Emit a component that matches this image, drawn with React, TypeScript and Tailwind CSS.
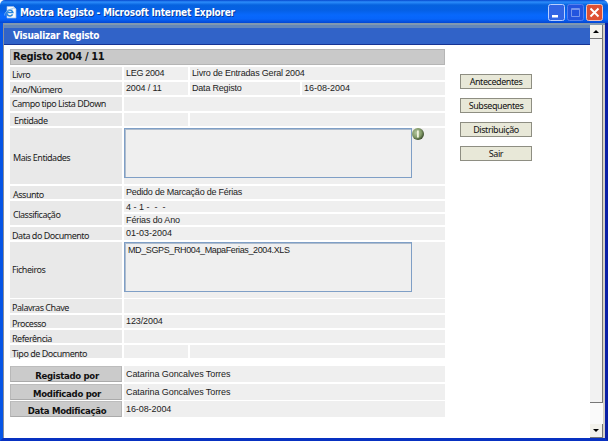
import React from "react";

const tahoma = "font-['Noto_Sans','DejaVu_Sans_Condensed',sans-serif]";
const bold = "font-['DejaVu_Sans_Condensed','DejaVu_Sans',sans-serif] [font-stretch:condensed] font-bold";
const arial = "font-['Liberation_Sans',sans-serif]";

type TextProps = { children: React.ReactNode; className?: string };

function Label({ children, className = "" }: TextProps) {
  return (
    <div className={`flex w-[112px] shrink-0 items-center bg-[#e9e9e9] whitespace-nowrap text-[#222] ${tahoma} text-[9px] leading-[10px] tracking-[-0.48px] ${className}`}>
      {children}
    </div>
  );
}

function Value({ children, className = "" }: { children?: React.ReactNode; className?: string }) {
  return (
    <div className={`flex items-center bg-[#efefef] pl-[2px] whitespace-nowrap text-[#222] ${arial} text-[9px] leading-[10px] ${className}`}>
      {children}
    </div>
  );
}

function Row({ children, className = "" }: TextProps) {
  return <div className={`flex shrink-0 gap-[2px] ${className}`}>{children}</div>;
}

function ListBox({ children }: { children?: React.ReactNode }) {
  return (
    <div className="h-[50px] w-[288px] shrink-0 border border-[#7f9fc6] bg-[#efefef]">
      <div className="h-full border-t border-l border-[#aebccd] pt-px pl-[2px]">{children}</div>
    </div>
  );
}

function Footer({ name, value, className }: { name: string; value: string; className: string }) {
  return (
    <Row className={`h-[16px] ${className}`}>
      <div className={`flex w-[112px] shrink-0 items-center justify-center border border-t-[#bdbdbd] border-r-[#b5b5b5] border-b-[#aaa] border-l-[#b8b8b8] bg-[#cbcbcb] pt-[3px] pl-[2px] ${bold} text-[9.5px] leading-[10px] whitespace-nowrap text-[#111]`}>
        <span className="tracking-[-0.3px]">{name}</span>
      </div>
      <Value className="flex-1"><span className="tracking-[-0.08px]">{value}</span></Value>
    </Row>
  );
}

function ActionButton({ children }: TextProps) {
  return (
    <button className={`flex h-[15px] w-[72px] items-center justify-center border border-[#8e8e82] bg-[#e8e8d8] text-[#111] ${tahoma} text-[9px] leading-[10px] tracking-[-0.43px] whitespace-nowrap`}>
      {children}
    </button>
  );
}

function ScrollButton({ down = false }: { down?: boolean }) {
  return (
    <div className="flex h-[14px] w-[13px] shrink-0 items-center justify-center border-r border-b border-[#777] bg-[#f3f2ec]">
      <svg width="6" height="3" viewBox="0 0 6 3">
        <path d={down ? "M0 0h6L3 3Z" : "M0 3h6L3 0Z"} fill="#000" />
      </svg>
    </div>
  );
}

function TitleBar() {
  return (
    <header className="flex h-[23px] shrink-0 items-center rounded-t-[5px] bg-[linear-gradient(180deg,#0647cd_0px,#2c8dfb_2px,#0662df_5px,#0560e4_10px,#0868fc_15px,#0765fa_19px,#0346d2_23px)] pt-[2px] pr-[5px] pl-[4px]">
      <svg width="13" height="13" viewBox="0 0 13 13">
        <path d="M3 .5h6.5L12 3v9H3Z" fill="#f8fafc" stroke="#9dbbe8" strokeWidth=".7" />
        <path d="M9.2.5V3H12" fill="#c8d9ee" />
        <path d="M8.6 8.4a3 3 0 1 1 .3-1.8H4" fill="none" stroke="#2785dc" strokeWidth="1.5" />
        <path d="M.8 9.5C0 7 4 3 9 2.8" fill="none" stroke="#81b8ed" />
      </svg>
      <h1 className={`ml-[3px] ${bold} text-[10px] leading-[12px] whitespace-nowrap text-white [text-shadow:1px_1px_#063a9b]`}>
        <span className="tracking-[-0.23px]">Mostra Registo - Microsoft Internet Explorer</span>
      </h1>
      <div className="ml-auto flex gap-[2px]">
        <svg width="17" height="17" viewBox="0 0 17 17">
          <rect x=".5" y=".5" width="16" height="16" rx="2" fill="#3265e4" stroke="#b9cfff" />
          <path d="M4 11h6v2.5H4Z" fill="#fff" />
        </svg>
        <svg width="17" height="17" viewBox="0 0 17 17">
          <rect x=".5" y=".5" width="16" height="16" rx="2" fill="#2354df" stroke="#547fee" />
          <path d="M4.5 4.5h8v8h-8zM4.5 5.5h8" fill="none" stroke="#7695ec" />
        </svg>
        <svg width="17" height="17" viewBox="0 0 17 17">
          <rect x=".5" y=".5" width="16" height="16" rx="2" fill="#de5034" stroke="#f1c4bd" />
          <path d="m4.5 4.5 8 8m0-8-8 8" stroke="#fff" strokeWidth="1.9" />
        </svg>
      </div>
    </header>
  );
}

export default function App() {
  return (
    <div className="flex h-[441px] w-[608px] flex-col overflow-hidden bg-white">
      <TitleBar />
      <div className="flex min-h-0 flex-1 border-r-[3px] border-b-[3px] border-l-[3px] border-r-[#0a20a5] border-b-[#0831c1] border-l-[#0755e6]">
        <div className="flex min-w-0 flex-1 border-t-2 border-l border-t-[#8098b0] border-l-[#8a8f9a]">
          <main className="flex min-w-0 flex-1 flex-col bg-white">
            <div className={`flex h-[20px] shrink-0 items-center border-t-[3px] border-b border-t-[#6387ba] border-b-[#173494] bg-[#3163c8] pl-[9px] ${bold} text-[10px] leading-[12px] text-white`}>
              <span className="tracking-[-0.27px]">Visualizar Registo</span>
            </div>
            <div className="flex pt-[4px] pl-[6px]">
              <section className="flex w-[435px] shrink-0 flex-col">
                <div className={`flex h-[16px] items-center border border-[#b5b5b5] bg-[#c9c9c9] pl-[2px] ${bold} text-[11px] leading-[12px] text-[#111]`}>
                  <span className="tracking-[-0.36px]">Registo 2004 / 11</span>
                </div>
                <Row className="mt-[2px] h-[13px]">
                  <Label className="pt-[3px] pl-[2px]">Livro</Label>
                  <Value className="w-[64px] pb-[2px]"><span className="tracking-[-0.3px]">LEG 2004</span></Value>
                  <Value className="flex-1 pb-[2px]"><span className="tracking-[-0.18px]">Livro de Entradas Geral 2004</span></Value>
                </Row>
                <Row className="mt-[2px] h-[13px]">
                  <Label className="pt-[3px] pl-[2px]">Ano/Número</Label>
                  <Value className="w-[64px] pb-[2px]"><span className="tracking-[-0.15px]">2004 / 11</span></Value>
                  <Value className="w-[110px] pb-[2px]"><span className="tracking-[-0.2px]">Data Registo</span></Value>
                  <Value className="flex-1 pb-[2px]">16-08-2004</Value>
                </Row>
                <Row className="mt-[2px] h-[14px]">
                  <Label className="pl-[2px]">Campo tipo Lista DDown</Label>
                  <Value className="flex-1" />
                </Row>
                <Row className="mt-[2px] h-[13px]">
                  <Label className="pt-[3px] pl-[4px]">Entidade</Label>
                  <Value className="w-[64px]" />
                  <Value className="flex-1" />
                </Row>
                <Row className="mt-[2px] h-[56px]">
                  <Label className="pt-[3px] pl-[3px]">Mais Entidades</Label>
                  <div className="flex flex-1 bg-[#efefef]">
                    <ListBox />
                    <svg className="shrink-0" width="13" height="13" viewBox="0 0 13 13">
                      <defs>
                        <radialGradient id="info" cx="40%" cy="40%" r="65%">
                          <stop offset="0" stopColor="#b9caa4" />
                          <stop offset=".6" stopColor="#829a68" />
                          <stop offset="1" stopColor="#304023" />
                        </radialGradient>
                      </defs>
                      <circle cx="6" cy="6" r="6" fill="url(#info)" />
                      <path d="M5 2.5h1.8v7H5Z" fill="#f0f4df" />
                    </svg>
                  </div>
                </Row>
                <Row className="mt-[2px] h-[13px]">
                  <Label className="pt-[4px] pl-[3px]">Assunto</Label>
                  <Value className="flex-1 pb-[2px]"><span className="tracking-[-0.23px]">Pedido de Marcação de Férias</span></Value>
                </Row>
                <Row className="mt-[2px] h-[24px]">
                  <Label className="pt-[3px] pl-[3px]">Classificação</Label>
                  <div className="flex flex-1 flex-col gap-[2px]">
                    <Value className="h-[11px]"><span className="whitespace-pre">4 - 1 -  -  -</span></Value>
                    <Value className="h-[11px]"><span className="tracking-[-0.12px]">Férias do Ano</span></Value>
                  </div>
                </Row>
                <Row className="mt-[2px] h-[13px]">
                  <Label className="pt-[4px] pl-[2px]">Data do Documento</Label>
                  <Value className="flex-1 pb-px">01-03-2004</Value>
                </Row>
                <Row className="mt-[2px] h-[56px]">
                  <Label className="pl-[2px]">Ficheiros</Label>
                  <div className={`flex-1 bg-[#efefef] text-[#222] ${arial} text-[9px] leading-[10px]`}>
                    <ListBox><span className="tracking-[-0.38px]">MD_SGPS_RH004_MapaFerias_2004.XLS</span></ListBox>
                  </div>
                </Row>
                <Row className="mt-[1px] h-[14px]">
                  <Label className="pt-[3px] pl-[2px]">Palavras Chave</Label>
                  <Value className="flex-1" />
                </Row>
                <Row className="mt-[2px] h-[13px]">
                  <Label className="pt-[4px] pl-[2px]">Processo</Label>
                  <Value className="flex-1 pb-px"><span className="tracking-[-0.1px]">123/2004</span></Value>
                </Row>
                <Row className="mt-[2px] h-[13px]">
                  <Label className="pt-[4px] pl-[2px]">Referência</Label>
                  <Value className="flex-1" />
                </Row>
                <Row className="mt-[2px] h-[13px]">
                  <Label className="pt-[4px] pl-[2px]">Tipo de Documento</Label>
                  <Value className="w-[64px]" />
                  <Value className="flex-1" />
                </Row>
                <Footer name="Registado por" value="Catarina Goncalves Torres" className="mt-[8px]" />
                <Footer name="Modificado por" value="Catarina Goncalves Torres" className="mt-[2px]" />
                <Footer name="Data Modificação" value="16-08-2004" className="mt-[1px]" />
              </section>
              <nav className="mt-[25px] ml-[15px] flex flex-col gap-[9px]">
                <ActionButton>Antecedentes</ActionButton>
                <ActionButton>Subsequentes</ActionButton>
                <ActionButton>Distribuição</ActionButton>
                <ActionButton>Sair</ActionButton>
              </nav>
            </div>
          </main>
          <aside className="flex w-[15px] shrink-0 flex-col border-r-2 border-[#d4d0c8] bg-[#f8f8f8]">
            <ScrollButton />
            <div className="h-[364px] border-r border-b border-[#777] bg-[#f2f2f2]" />
            <div className="flex-1 bg-[#fafafa]" />
            <ScrollButton down />
          </aside>
        </div>
      </div>
    </div>
  );
}
